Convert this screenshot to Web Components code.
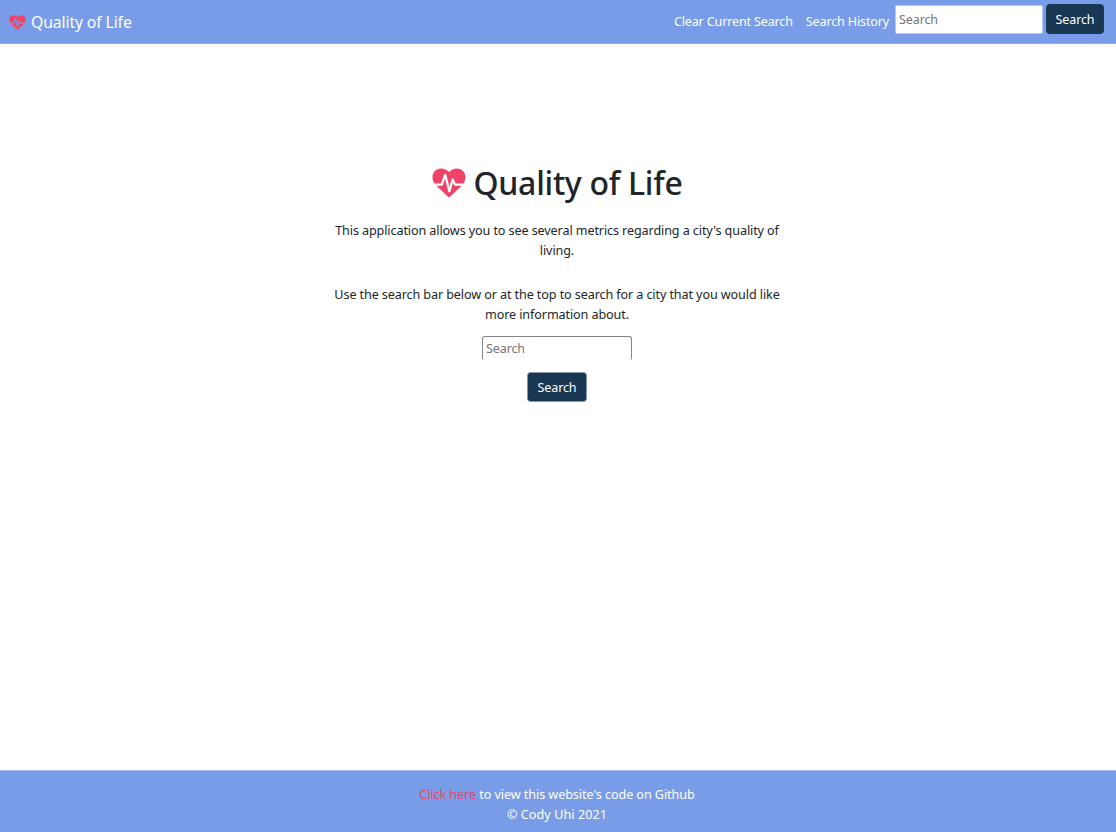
<!DOCTYPE html>
<html lang="en"><head><meta charset="utf-8"><title>Quality of Life</title>
<style>
html,body{margin:0;height:100%}
body{font-family:"Noto Sans","Open Sans",sans-serif;font-size:12.6px;line-height:20px;color:#212529;background:#fff;overflow:hidden}
</style></head><body>
<life-app></life-app>
<script>
const define=(name,html)=>customElements.define(name,class extends HTMLElement{
  constructor(){super();this.attachShadow({mode:'open'}).innerHTML=html;}
});
define('heart-icon',`<style>:host{display:inline-block;flex:none;width:1em;height:.882em;color:#f0436a}svg{display:block;width:100%;height:100%}</style>
<svg viewBox="0 0 34 30"><path fill="currentColor" d="M17 4.2C19.2 1.6 21.8.4 24.8.4 29.8.4 33.5 4.2 33.5 9.2c0 3.4-1.4 6-3.9 8.6L18 28.8c-.6.6-1.4.6-2 0L4.4 17.8C1.9 15.2.5 12.6.5 9.2.5 4.2 4.2.4 9.2.4c3 0 5.6 1.2 7.8 3.8z"/><path fill="none" stroke="var(--pulse,#fff)" stroke-width="2.2" stroke-linejoin="round" d="M1 16.6H9.8L13.2 6.8 17.4 23.2 20.6 11.6 23 16.6H33"/></svg>`);
define('search-button',`<style>:host{display:block;width:59px;height:30px}button{display:block;box-sizing:border-box;width:100%;height:100%;padding:2px 0 0;border:1px solid var(--edge,#1a3a5a);border-radius:3.5px;background:#193753;color:#fff;font:inherit;font-size:12.5px;line-height:26px;letter-spacing:-.1px}</style><button><slot></slot></button>`);
define('search-field',`<style>:host{display:block;box-sizing:border-box;overflow:hidden;background:#fff}input{box-sizing:border-box;display:block;width:100%;height:100%;border:0;margin:0;padding:0 3px;background:transparent;font:inherit;font-size:12.5px;letter-spacing:-.1px;outline:0}input::placeholder{color:#757575;opacity:1}</style><input placeholder="Search" aria-label="Search">`);
define('nav-bar',`<style>
:host{display:flex;box-sizing:border-box;height:44px;padding:0 12px 0 9px;background:#789ce8;color:#fff;border-bottom:1px solid #8badec}
.brand{display:flex;align-items:center;gap:5px;font-size:15.8px;line-height:22px;letter-spacing:-.14px;height:44px;flex:1;--pulse:#789ce8}
.brand heart-icon{font-size:17px}
a{line-height:44px;margin-right:13px;white-space:nowrap;letter-spacing:-.17px}a+a{margin-right:6px}
search-field{width:148px;height:29px;margin:5px 3px 0 0;border:1px solid #b3c9f3;border-radius:2px}
search-button{width:58px;margin-top:4px}
</style><div class="brand"><heart-icon></heart-icon><span>Quality of Life</span></div><a>Clear Current Search</a><a>Search History</a><search-field></search-field><search-button>Search</search-button>`);
define('home-intro',`<style>
:host{display:flex;flex-direction:column;align-items:center;padding-top:119px;width:470px;text-align:center}
h1{display:flex;align-items:center;gap:8px;margin:0;height:40px;font-size:32px;font-weight:500;line-height:40px;white-space:nowrap;letter-spacing:-.27px}
h1 heart-icon{font-size:34px}
p{margin:0;letter-spacing:-.105px}.a{margin-top:18px}.b{margin-top:24px}
search-field{width:150px;height:24px;margin-top:11px;border:1px solid #858585;border-bottom:0;border-radius:3px 3px 2px 2px}
search-button{width:60px;margin-top:12.4px;--edge:#8799a8}
</style><h1><heart-icon></heart-icon><span>Quality of Life</span></h1>
<p class="a">This application allows you to see several metrics regarding a city's quality of<br>living.</p>
<p class="b">Use the search bar below or at the top to search for a city that you would like<br>more information about.</p>
<search-field></search-field><search-button>Search</search-button>`);
define('page-footer',`<style>:host{display:block;box-sizing:border-box;height:62px;padding:14px 2px 0 0;border-top:1px solid #a3bbef;background:#789ce8;color:#fff;text-align:center}a{color:#f0436a}.link{letter-spacing:-.07px}.copy{letter-spacing:.07px}</style>
<div class="link"><a>Click here</a> to view this website's code on Github</div><div class="copy">© Cody Uhi 2021</div>`);
define('life-app',`<style>:host{display:flex;flex-direction:column;height:100vh}main{flex:1;display:flex;justify-content:center;padding-right:2px}</style>
<nav-bar></nav-bar><main><home-intro></home-intro></main><page-footer></page-footer>`);
</script></body></html>
